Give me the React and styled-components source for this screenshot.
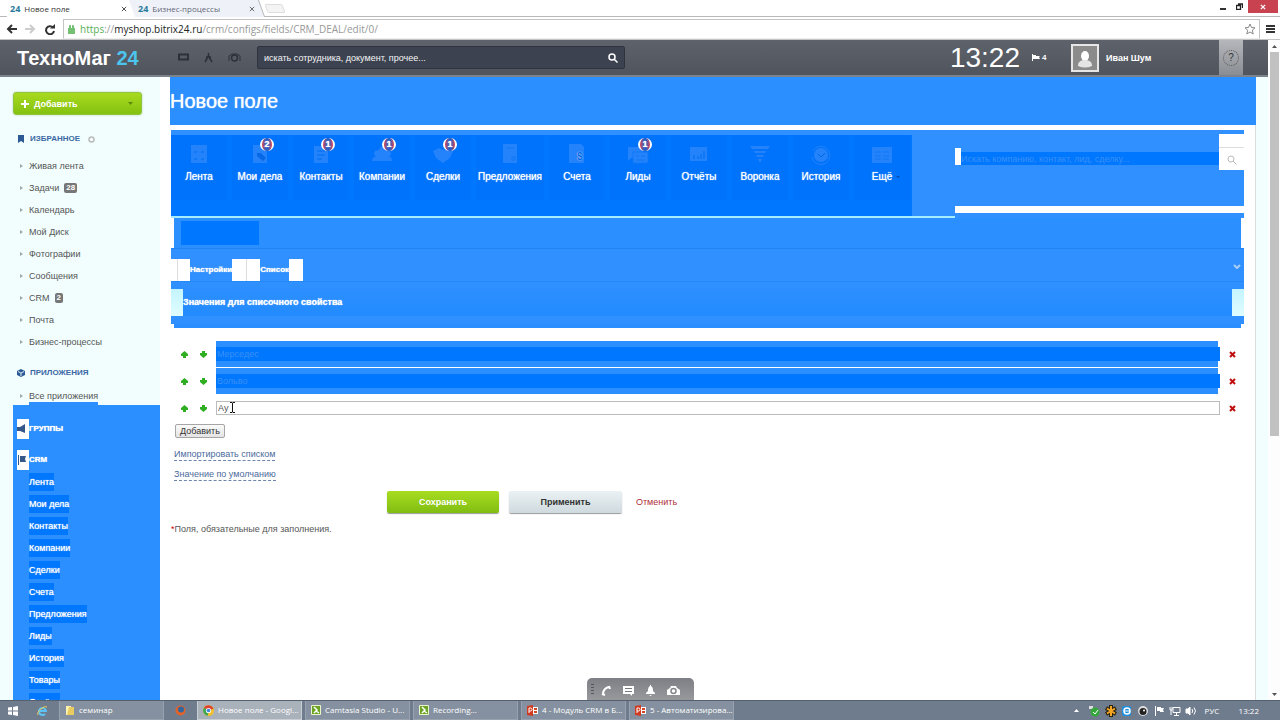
// App.jsx
import React from 'react';
import styled, { createGlobalStyle, css } from 'styled-components';

const SELECT = '#2b8fff';
const SELECT_DARK = '#0077ff';

const GlobalStyle = createGlobalStyle`
  * {
    box-sizing: border-box;
  }
  body {
    margin: 0;
    background: #fff;
    color: #555;
    font-family: "Liberation Sans", Arial, sans-serif;
    font-size: 9px;
    line-height: 12px;
  }
  a {
    color: inherit;
    text-decoration: none;
  }
  ul {
    margin: 0;
    padding: 0;
    list-style: none;
  }
  button,
  input {
    margin: 0;
    padding: 0;
    border: none;
    background: none;
    color: inherit;
    font: inherit;
    outline: none;
  }
  button {
    cursor: pointer;
  }
  svg {
    display: block;
    flex: none;
  }
`;

const Desktop = styled.div`
  display: flex;
  flex-direction: column;
  height: 100vh;
  overflow: hidden;
`;

/* ---------- browser ---------- */

const TabStrip = styled.div`
  display: flex;
  flex: none;
  height: 17px;
  padding-left: 4px;
  border-bottom: 1px solid #b9b9b9;
  font-family: "Open Sans", "Noto Sans", sans-serif;
  font-size: 8px;
  color: #444;
`;

const BrowserTab = styled.div`
  position: relative;
  z-index: 0;
  display: flex;
  align-items: center;
  gap: 4px;
  width: 128px;
  height: 17px;
  padding: 0 5px 0 6px;
  color: ${(p) => (p.$active ? '#333' : '#667')};

  &::before {
    content: '';
    position: absolute;
    z-index: -1;
    inset: 0 -2px 0 0;
    background: ${(p) => (p.$active ? '#fff' : '#eef2f8')};
    border-right: 1px solid #b9b9b9;
    transform: skewX(20deg);
  }

  b {
    color: #2a7a9c;
    font-size: 9px;
  }
  span {
    flex: 1;
  }
`;

const NewTab = styled.button`
  width: 18px;
  height: 9px;
  margin: 4px 0 0 6px;
  border: 1px solid #ddd;
  background: #f4f4f4;
  border-radius: 2px;
  transform: skewX(20deg);
`;

const WindowButtons = styled.div`
  display: flex;
  align-items: flex-start;
  margin-left: auto;
  padding-right: 2px;
`;

const WindowButton = styled.button`
  display: flex;
  align-items: center;
  justify-content: center;
  width: ${(p) => (p.$close ? 30 : 17)}px;
  height: 13px;
  background: ${(p) => (p.$close ? '#c8434f' : 'transparent')};
`;

const Toolbar = styled.div`
  display: flex;
  align-items: center;
  flex: none;
  gap: 6px;
  height: 23px;
  padding: 2px 5px 0 6px;
  border-bottom: 1px solid #c4c4c4;
`;

const Address = styled.div`
  display: flex;
  align-items: center;
  flex: 1;
  gap: 4px;
  height: 20px;
  padding: 0 3px;
  border: 1px solid #c4c4c4;
  border-bottom-color: #eee;
  font-family: "Open Sans", "Noto Sans", sans-serif;
  font-size: 10px;
  color: #999;

  p {
    flex: 1;
    margin: 0;
  }
  i {
    font-style: normal;
    color: #58b158;
  }
  b {
    font-weight: normal;
    color: #222;
  }
`;

const Viewport = styled.div`
  position: relative;
  display: flex;
  flex: 1;
  min-height: 0;
`;

const Page = styled.div`
  display: flex;
  flex-direction: column;
  flex: 1;
  min-width: 0;
  background: #f2fefe;
`;

const Scrollbar = styled.div`
  display: flex;
  flex-direction: column;
  align-items: center;
  width: 12px;
  padding: 5px 0 4px 1px;
  background: #fdfdfd;
`;

const ScrollThumb = styled.div`
  width: 9px;
  height: 59%;
  margin: 4px 0 auto;
  background: #c1c1c1;
`;

/* ---------- portal header ---------- */

const Header = styled.header`
  display: flex;
  align-items: center;
  flex: none;
  height: 37px;
  padding-left: 17px;
  background: linear-gradient(#5e626b, #50545d);
  border-bottom: 2px solid #7d838b;
  color: #fff;
`;

const Logo = styled.a`
  width: 161px;
  font-weight: bold;
  font-size: 20px;
  line-height: 24px;

  span {
    color: #4cc5ec;
  }
`;

const HeaderIcons = styled.div`
  display: flex;
  gap: 14px;
  width: 79px;
  color: #2c3038;
`;

const HeaderSearch = styled.form`
  display: flex;
  align-items: center;
  flex: 0 1 368px;
  height: 23px;
  padding: 0 6px;
  background: #3c424f;
  border: 1px solid #2e333d;
  border-radius: 2px;

  input {
    flex: 1;
    min-width: 0;
  }
  input::placeholder {
    color: #f4f5f7;
    opacity: 1;
  }
`;

const Clock = styled.div`
  margin-left: auto;
  font-size: 28px;
  line-height: 32px;
`;

const Flag = styled.div`
  display: flex;
  align-items: center;
  gap: 2px;
  width: 51px;
  padding-left: 12px;
  font-size: 8px;
  font-weight: bold;
`;

const Avatar = styled.div`
  display: flex;
  align-items: flex-end;
  justify-content: center;
  width: 28px;
  height: 28px;
  background: #8b8b8b;
  border: 2px solid #e6e6e6;
`;

const UserName = styled.a`
  width: 120px;
  padding-left: 7px;
  font-weight: bold;
`;

const HelpButton = styled.button`
  display: flex;
  align-items: center;
  justify-content: center;
  align-self: stretch;
  width: 24px;
  margin-right: 25px;
  background: linear-gradient(#b5b7bb, #8a8d93);
  color: #333;

  span {
    width: 16px;
    height: 16px;
    border: 1px dotted #555;
    border-radius: 50%;
    font-size: 10px;
    line-height: 14px;
  }
`;

/* ---------- sidebar ---------- */

const Body = styled.div`
  display: flex;
  flex: 1;
  min-height: 0;
`;

const Sidebar = styled.nav`
  flex: none;
  width: 160px;
  padding: 15px 0 0 13px;
  overflow: hidden;
`;

const AddButton = styled.button`
  display: flex;
  align-items: center;
  width: 129px;
  height: 23px;
  margin-bottom: 13px;
  padding: 0 8px 0 7px;
  gap: 5px;
  background: linear-gradient(#a8da1f, #84c110);
  border: 1px solid #8fc53a;
  border-radius: 3px;
  box-shadow: 0 0 2px #b0c8a0;
  color: #fff;
  font-weight: bold;

  span {
    flex: 1;
    text-align: left;
  }
`;

const SideHeading = styled.h3`
  display: flex;
  align-items: center;
  gap: 5px;
  height: 22px;
  margin: 0;
  padding-left: 4px;
  font-size: 8px;
  font-weight: bold;
  color: #3a68a4;

  span {
    margin-right: 3px;
  }
`;

const SideList = styled.ul`
  padding: 5px 0 9px;
`;

const SideItem = styled.li`
  display: flex;
  align-items: center;
  gap: 5px;
  height: 22px;

  &::before {
    content: '';
    margin: 0 1px 0 7px;
    border: 2px solid transparent;
    border-left: 3px solid #9aa;
    border-right: none;
  }
`;

const Count = styled.b`
  padding: 0 2px;
  background: #777;
  border-radius: 2px;
  color: #fff;
  font-size: 8px;
  line-height: 10px;
`;

const LastItem = styled(SideItem)`
  height: 21px;
  align-items: flex-end;

  &::before {
    margin-bottom: 7px;
  }
  a {
    border-bottom: 3px solid ${SELECT};
  }
`;

const glow = css`
  color: #fff;
  text-shadow: 0 0 1px #fff;
`;

const SelectedBlock = styled.div`
  padding-top: 14px;
  background: ${SELECT};
`;

const SelectedHeading = styled.h3`
  display: flex;
  align-items: center;
  height: 20px;
  margin: 0 0 11px 4px;
  font-size: 8px;
  font-weight: bold;
  ${glow}

  svg {
    width: 12px;
    height: 20px;
    padding: 4px 2px 4px 0;
    background: #fff;
    color: #35588a;
  }
`;

const SelectedList = styled.ul`
  margin-top: -10px;
`;

const SelectedItem = styled.li`
  height: 22px;
  padding: 2px 0 2px 16px;

  a {
    display: inline-block;
    height: 18px;
    background: ${SELECT_DARK};
    line-height: 18px;
    ${glow}
  }
`;

/* ---------- content ---------- */

const Content = styled.main`
  flex: 1;
  min-width: 0;
  padding-left: 10px;
  background: #fff;
  border-right: 1px solid #d8dcdc;
`;

const Gutter = styled.div`
  flex: none;
  width: 12px;
`;

const Title = styled.h1`
  height: 48px;
  margin: 0 -1px 5px 0;
  background: ${SELECT};
  ${glow}
  font-size: 20px;
  font-weight: normal;
  line-height: 48px;
`;

const Panel = styled.section`
  margin: 0 11px 0 1px;
`;

const CrmBar = styled.div`
  display: flex;
  height: 88px;
  background: #3090ff;
`;

const MenuSide = styled.div`
  flex: none;
  width: 784px;
  padding-top: 5px;
  border-bottom: 2px solid #a6ecff;
`;

const CrmMenu = styled.ul`
  display: flex;
  gap: 5px;
  width: 741px;
  height: 81px;
  background: ${SELECT_DARK};
`;

const MenuItem = styled.li`
  width: ${(p) => (p.$wide ? 68 : 56)}px;

  a {
    position: relative;
    display: flex;
    flex-direction: column;
    align-items: center;
    gap: 6px;
    height: 65px;
    padding-top: 8px;
    background: #0073fc;
    ${glow}
    font-size: 10px;
    white-space: nowrap;
  }
  svg {
    width: 22px;
    height: 22px;
    color: #2482fa;
  }
`;

const Badge = styled.b`
  position: absolute;
  top: 3px;
  left: 50%;
  width: 14px;
  height: 13px;
  border: solid #fff;
  border-width: 0 2px;
  border-radius: 7px;
  background: linear-gradient(90deg, #e0434c, #2760c8 40%, #2760c8 60%, #e0434c);
  font-size: 9px;
  line-height: 13px;
  text-align: center;
`;

const MenuArrow = styled.i`
  display: inline-block;
  margin: 0 -8px 2px 4px;
  border: 2px solid transparent;
  border-top-color: #0a4fa8;
  border-bottom: none;
`;

const SearchSide = styled.div`
  display: flex;
  flex-direction: column;
  flex: 1;
  min-width: 0;
  padding-top: 4px;
`;

const CrmSearch = styled.form`
  display: flex;
  height: 36px;
  margin-bottom: 36px;

  &::before {
    content: '';
    width: 6px;
    height: 17px;
    margin-top: 14px;
    background: #fff;
  }
  input {
    flex: 1;
    min-width: 0;
    height: 13px;
    margin-top: 18px;
    background: ${SELECT_DARK};
  }
  input::placeholder {
    color: #3a90f6;
    opacity: 1;
  }
  button {
    display: flex;
    align-items: flex-end;
    justify-content: center;
    width: 25px;
    padding-bottom: 5px;
    background: linear-gradient(#fff 13px, #ddd 13px, #ddd 14px, #fff 14px);
    color: #bbb;
  }
`;

const WhiteBar = styled.div`
  height: 7px;
  background: #fff;
`;

const Strip = styled.div`
  height: ${(p) => p.$height}px;
  margin: 0 3px;
  padding: ${(p) => (p.$height > 10 ? '3px 7px' : 0)};
  background: ${SELECT};

  &::before {
    content: '';
    display: ${(p) => (p.$height > 10 ? 'block' : 'none')};
    width: 78px;
    height: 24px;
    background: ${SELECT_DARK};
  }
`;

const FormTabs = styled.div`
  display: flex;
  align-items: center;
  height: 34px;
  padding: 9px 0 0;
  background: #3090ff;
  border-top: 1px solid #2084f5;
  border-bottom: 1px solid #2388f8;

  button {
    height: 22px;
    font-size: 8px;
    font-weight: bold;
    ${glow}
  }
  svg {
    margin: 0 3px 6px auto;
    color: #a9cdf5;
  }
`;

const TabEdge = styled.span`
  width: ${(p) => p.$width}px;
  height: 22px;
  background: #fff;

  & + & {
    border-left: 1px solid #ddd;
  }
`;

const SectionHead = styled.div`
  display: flex;
  justify-content: space-between;
  padding: 7px 0 8px;
  background: linear-gradient(#3090ff, #228bff 80%, #3090ff 82%);

  &::before,
  &::after {
    content: '';
    width: 12px;
    height: 27px;
    background: linear-gradient(#c4f4ff, #e0fdff);
  }
  h2 {
    flex: 1;
    margin: 0;
    font-size: 9px;
    line-height: 27px;
    ${glow}
  }
`;

const Values = styled.div`
  display: flex;
  flex-direction: column;
  gap: 1px;
  padding: 13px 0 3px 4px;
`;

const ValueRow = styled.div`
  display: flex;
  align-items: center;
  height: 26px;

  button {
    display: flex;
    justify-content: center;
    width: 19px;
    color: #2fae22;
  }
  button:last-child {
    width: 24px;
    color: #c00d0d;
  }
`;

const ValueField = styled.div`
  display: flex;
  align-items: center;
  flex: 1;
  height: 26px;
  margin: 0 2px 0 3px;
  background: ${(p) => (p.$selected ? SELECT : 'transparent')};

  input {
    flex: 1;
    width: 100%;
    height: 14px;
    margin-right: -2px;
    padding: 0 1px;
    background: ${(p) => (p.$selected ? SELECT_DARK : '#fff')};
    border: ${(p) => (p.$selected ? 'none' : '1px solid #bbb')};
    color: ${(p) => (p.$selected ? '#3a90f6' : '#555')};
  }
`;

const Cursor = styled.svg`
  position: absolute;
  left: 229px;
  top: 362px;
  color: #111;
`;

const PlainButton = styled.button`
  display: block;
  width: 50px;
  height: 14px;
  margin: 0 0 11px 4px;
  background: linear-gradient(#fafafa, #e4e4e4);
  border: 1px solid #a5a5a5;
  border-radius: 2px;
  color: #333;
  line-height: 12px;
`;

const DashedLink = styled.a`
  display: table;
  margin: 0 0 8px 3px;
  border-bottom: 1px dashed #6d85ad;
  color: #4c6a9b;
  line-height: 11px;
`;

const Actions = styled.div`
  display: flex;
  align-items: center;
  gap: 10px;
  padding: 2px 0 10px 216px;

  a {
    margin-left: 4px;
    color: #b03038;
  }
`;

const ActionButton = styled.button`
  width: ${(p) => (p.$primary ? 112 : 113)}px;
  height: 22px;
  border-radius: 2px;
  background: ${(p) =>
    p.$primary ? 'linear-gradient(#a8dc20, #80bd12)' : 'linear-gradient(#eaf1f4, #cfdade)'};
  box-shadow: 0 1px 1px #999;
  color: ${(p) => (p.$primary ? '#fff' : '#333')};
  font-weight: bold;
`;

const Note = styled.p`
  margin: 0;

  span {
    color: #c00;
  }
`;

const Dock = styled.div`
  position: absolute;
  bottom: 0;
  left: 50%;
  display: flex;
  align-items: center;
  justify-content: space-between;
  width: 107px;
  height: 22px;
  margin-left: -53px;
  padding: 2px 14px 0 4px;
  background: linear-gradient(#7d7f84, #97999d);
  border-radius: 5px 5px 0 0;
  color: #fff;

  &::before {
    content: '';
    width: 3px;
    height: 12px;
    margin-right: -4px;
    background: repeating-linear-gradient(#55575c 0 1px, transparent 1px 3px);
  }
`;

/* ---------- taskbar ---------- */

const Taskbar = styled.footer`
  display: flex;
  align-items: center;
  flex: none;
  height: 20px;
  background: #6f7c8e;
  border-top: 1px solid #555f6e;
  color: #fff;
  font-family: "Open Sans", "Noto Sans", sans-serif;
  font-size: 8px;
`;

const QuickLaunch = styled.button`
  display: flex;
  justify-content: center;
  width: ${(p) => p.$width}px;
`;

const Task = styled.button`
  display: flex;
  align-items: center;
  gap: 4px;
  width: 105px;
  height: 19px;
  margin-right: ${(p) => (p.$spaced ? 0 : 3)}px;
  padding: 0 5px;
  background: ${(p) => (p.$active ? '#a9b1bb' : '#8591a0')};
  border: 1px solid ${(p) => (p.$active ? '#c9ced5' : '#98a2af')};
  border-top: none;
  white-space: nowrap;
`;

const Tray = styled.div`
  display: flex;
  align-items: center;
  gap: 4px;
  margin-left: auto;
  padding-right: 21px;

  span {
    width: 34px;
    padding-left: 4px;
  }
`;

/* ---------- drawings ---------- */

const Magnifier = ({ size = 10, width = 2 }) => (
  <svg width={size} height={size} viewBox="0 0 10 10" fill="none" stroke="currentColor" strokeWidth={width}>
    <circle cx="4" cy="4" r="3" />
    <path d="M6 6l3.500 3.500" />
  </svg>
);

const menuIcons = {
  feed: (
    <>
      <path d="M3 2h16v18H3z" />
      <path d="M6 9h3m4 0h3M6 16h3m4 0h3" stroke="#0f78f6" strokeWidth="2" />
    </>
  ),
  tasks: (
    <>
      <path d="M4 2h14v18H4z" />
      <path d="M8 10h4l5 5-3 3-6-5z" fill="#0668e6" />
    </>
  ),
  contacts: (
    <>
      <path d="M4 3h14v17H4z" />
      <path d="M7 8h8M7 12h8M7 16h5" stroke="#0f78f6" strokeWidth="2" />
    </>
  ),
  companies: (
    <path d="M1 18c0-4 3-4 4-5a3 3 0 1 1 4-2 4 4 0 1 1 5 0 3 3 0 1 1 4 2c1 1 3 1 3 5z" />
  ),
  deals: <path d="M1 8l6-3 4 2 4-2 6 3-3 7-7 5-7-5z" />,
  offers: (
    <>
      <path d="M4 1h14v19H4z" />
      <path d="M7 5h8M13 14h3v3h-3z" stroke="#0f78f6" strokeWidth="1" />
    </>
  ),
  bills: (
    <>
      <path d="M3 1h12l3 3v16H3z" />
      <text x="11" y="17" fontSize="10" fontWeight="bold" fill="#0068e8">$</text>
    </>
  ),
  leads: (
    <>
      <path d="M1 4h15v11H4l-3 3z" />
      <path d="M6 9h15v11H6z" stroke="#0f78f6" />
      <path d="M9 13h3m2 0h4m-9 4h9" stroke="#0f78f6" />
    </>
  ),
  reports: (
    <>
      <path d="M2 4h17v14H2z" />
      <path d="M6 16v-4m4 4v-3m3 3v-5m3 5v-8" stroke="#0f78f6" strokeWidth="2" />
    </>
  ),
  funnel: (
    <path d="M1 3h20l-2 3H3zM5 8h12l-1 2H6zM7 12h8l-1 2H8zM9 16h4l-2 4z" />
  ),
  history: (
    <>
      <circle cx="11" cy="12" r="7" />
      <path d="M3 8a9 9 0 1 1-1 6" fill="none" stroke="currentColor" />
      <path d="M8 11l3 3 4-4" fill="none" stroke="#0068e8" strokeWidth="1" />
    </>
  ),
  more: (
    <>
      <path d="M1 4h20v16H1z" />
      <path d="M4 9h6m2 0h6M4 13h6m2 0h6M4 16h6m2 0h6" stroke="#0f78f6" strokeWidth="1" />
    </>
  ),
};

const MenuIcon = ({ name }) => (
  <svg viewBox="0 0 22 22" fill="currentColor">{menuIcons[name]}</svg>
);

const Arrow = ({ down }) => (
  <svg width="9" height="9" viewBox="0 0 9 9" fill="currentColor">
    <path d={down ? 'M3 1h3v2h2v2L4.500 8 1 5V3h2z' : 'M4.500 1L8 4v2H6v2H3V6H1V4z'} />
  </svg>
);

const Cross = ({ size = 7, color = 'currentColor', width = 2 }) => (
  <svg width={size} height={size} viewBox="0 0 7 7" stroke={color} strokeWidth={width}>
    <path d="M1 1l5 5M6 1L1 6" />
  </svg>
);

const Triangle = ({ up }) => (
  <svg width="5" height="3" viewBox="0 0 5 3" fill="currentColor">
    <path d={up ? 'M0 3L2.500 0 5 3z' : 'M0 0h5L2.500 3z'} />
  </svg>
);

const FolderIcon = () => (
  <svg width="10" height="11" viewBox="0 0 10 11">
    <path d="M1 1h5v9H1z" fill="#fff3b0" />
    <path d="M4 2h5v8H2z" fill="#e8cc62" />
  </svg>
);

const ChromeIcon = () => (
  <svg width="11" height="11" viewBox="0 0 12 12">
    <circle cx="6" cy="6" r="6" fill="#f2c12d" />
    <path d="M6 6L1 3a6 6 0 0 1 10.500 1z" fill="#dc4234" />
    <path d="M6 6L1 3a6 6 0 0 0 4 9z" fill="#3fa757" />
    <circle cx="6" cy="6" r="2.800" fill="#fff" />
    <circle cx="6" cy="6" r="2" fill="#4387d6" />
  </svg>
);

const CamtasiaIcon = () => (
  <svg width="10" height="10" viewBox="0 0 10 10">
    <rect width="10" height="10" rx="1" fill="#eaf5c8" />
    <rect x="1" y="1" width="8" height="8" fill="#6da324" />
    <path d="M3 2l3 3-3 3M5 6l3 2" stroke="#fff" fill="none" strokeWidth="1.500" />
  </svg>
);

const PowerPointIcon = () => (
  <svg width="11" height="11" viewBox="0 0 11 11">
    <path d="M5 2h6v7H5z" fill="#fff" />
    <path d="M7 3h3v2H7zM7 6h3v2H7z" fill="#d24726" />
    <path d="M0 1l6-1v11l-6-1z" fill="#d03a20" />
    <path d="M2 8V3h1.500a1.300 1.300 0 0 1 0 3H2" stroke="#fff" fill="none" />
  </svg>
);

/* ---------- data ---------- */

const favourites = [
  { title: 'Живая лента' },
  { title: 'Задачи', count: 28 },
  { title: 'Календарь' },
  { title: 'Мой Диск' },
  { title: 'Фотографии' },
  { title: 'Сообщения' },
  { title: 'CRM', count: 2 },
  { title: 'Почта' },
  { title: 'Бизнес-процессы' },
];

const crmLinks = [
  'Лента', 'Мои дела', 'Контакты', 'Компании', 'Сделки', 'Счета',
  'Предложения', 'Лиды', 'История', 'Товары', 'Отчёты',
];

const crmMenu = [
  { title: 'Лента', icon: 'feed' },
  { title: 'Мои дела', icon: 'tasks', count: 2 },
  { title: 'Контакты', icon: 'contacts', count: 1 },
  { title: 'Компании', icon: 'companies', count: 1 },
  { title: 'Сделки', icon: 'deals', count: 1 },
  { title: 'Предложения', icon: 'offers', wide: true },
  { title: 'Счета', icon: 'bills' },
  { title: 'Лиды', icon: 'leads', count: 1 },
  { title: 'Отчёты', icon: 'reports' },
  { title: 'Воронка', icon: 'funnel' },
  { title: 'История', icon: 'history' },
  { title: 'Ещё', icon: 'more', arrow: true },
];

const values = [
  { text: 'Мерседес', selected: true },
  { text: 'Вольво', selected: true },
  { text: 'Ау' },
];

/* ---------- parts ---------- */

const Browser = () => (
  <>
    <TabStrip>
      <BrowserTab $active>
        <b>24</b>
        <span>Новое поле</span>
        <Cross size={6} color="#333" width={1} />
      </BrowserTab>
      <BrowserTab>
        <b>24</b>
        <span>Бизнес-процессы</span>
        <Cross size={6} color="#555" width={1} />
      </BrowserTab>
      <NewTab aria-label="Новая вкладка" />
      <WindowButtons>
        <WindowButton aria-label="Свернуть">
          <svg width="6" height="6"><path d="M0 4h6v2H0z" fill="#333" /></svg>
        </WindowButton>
        <WindowButton aria-label="Развернуть">
          <svg width="7" height="7" fill="none" stroke="#222">
            <path d="M.5 2.500h4v4h-4zM2 1h4.500v4" strokeWidth="1.300" />
          </svg>
        </WindowButton>
        <WindowButton $close aria-label="Закрыть">
          <Cross size={6} color="#fff" width={1.5} />
        </WindowButton>
      </WindowButtons>
    </TabStrip>
    <Toolbar>
      <svg width="12" height="10" viewBox="0 0 12 10" fill="none" stroke="#333" strokeWidth="2">
        <path d="M11 5H2M6 1L2 5l4 4" />
      </svg>
      <svg width="12" height="10" viewBox="0 0 12 10" fill="none" stroke="#ccc" strokeWidth="2">
        <path d="M1 5h9M6 1l4 4-4 4" />
      </svg>
      <svg width="15" height="11" viewBox="0 0 15 11" fill="none" stroke="#333" strokeWidth="2">
        <path d="M11 3.500A4 4 0 1 0 12 7" />
        <path d="M8 4.500h5V0z" fill="#333" stroke="none" />
      </svg>
      <Address>
        <svg width="9" height="10" viewBox="0 0 9 10" fill="#74c174">
          <path d="M1 4h7v6H1z" />
          <path d="M2.500 4V1.500h1V4M5.500 4V1.500h1V4" stroke="#74c174" />
        </svg>
        <p><i>https</i>://<b>myshop.bitrix24.ru</b>/crm/configs/fields/CRM_DEAL/edit/0/</p>
        <svg width="12" height="12" viewBox="0 0 12 12" fill="none" stroke="#888">
          <path d="M6 1l1.500 3.500 3.500.3-2.700 2.400.9 3.800L6 9l-3.200 2 .9-3.800L1 4.800l3.500-.3z" />
        </svg>
      </Address>
      <svg width="9" height="9" fill="#333"><path d="M0 0h9v2H0zM0 3h9v2H0zM0 6h9v2H0z" /></svg>
    </Toolbar>
  </>
);

const PortalHeader = () => (
  <Header>
    <Logo href="#">ТехноМаг <span>24</span></Logo>
    <HeaderIcons>
      <svg width="11" height="11" viewBox="0 0 11 11" fill="none" stroke="currentColor" strokeWidth="2">
        <path d="M1 2.500h9v5H1z" />
      </svg>
      <svg width="11" height="11" viewBox="0 0 11 11" fill="none" stroke="currentColor" strokeWidth="1.500">
        <path d="M5.500 1v3L2 10M5.500 4L9 10M3 5h5" />
      </svg>
      <svg width="13" height="11" viewBox="0 0 13 11" fill="none" stroke="currentColor" strokeWidth="1.500">
        <path d="M1 9V4l3-2h5l3 2v5" strokeWidth="1" />
        <circle cx="6.500" cy="6" r="3" />
      </svg>
    </HeaderIcons>
    <HeaderSearch>
      <input type="text" aria-label="Поиск" placeholder="искать сотрудника, документ, прочее..." />
      <button type="button" aria-label="Найти"><Magnifier width={1.5} /></button>
    </HeaderSearch>
    <Clock>13:22</Clock>
    <Flag>
      <svg width="8" height="7" fill="#fff"><path d="M0 0h1v7H0zM1 1h3v1h4L7 3l1 2H1z" /></svg>
      4
    </Flag>
    <Avatar>
      <svg width="18" height="22" viewBox="0 0 18 22" fill="#fff">
        <ellipse cx="9" cy="8" rx="4" ry="5" />
        <path d="M2 18c0-4 2-5 5-6h4c3 1 5 2 5 6q-7 3-14 0z" fill="#e4e4e4" />
      </svg>
    </Avatar>
    <UserName href="#">Иван Шум</UserName>
    <HelpButton aria-label="Помощь"><span>?</span></HelpButton>
  </Header>
);

const SideMenu = () => (
  <Sidebar>
    <AddButton>
      <svg width="8" height="8" stroke="#fff" strokeWidth="2"><path d="M4 0v8M0 4h8" /></svg>
      <span>Добавить</span>
      <svg width="5" height="3" fill="#5c8a10"><path d="M0 0h5L2.500 3z" /></svg>
    </AddButton>
    <SideHeading>
      <svg width="8" height="8" fill="#2b5a94"><path d="M1 0h6v8L4 6 1 8z" /></svg>
      <span>ИЗБРАННОЕ</span>
      <svg width="7" height="7" fill="none" stroke="#bbb" strokeWidth="1.500"><circle cx="3.500" cy="3.500" r="2.500" /></svg>
    </SideHeading>
    <SideList>
      {favourites.map((item) => (
        <SideItem key={item.title}>
          <a href="#">{item.title}</a>
          {item.count && <Count>{item.count}</Count>}
        </SideItem>
      ))}
    </SideList>
    <SideHeading>
      <svg width="8" height="8" viewBox="0 0 8 8">
        <path d="M4 0l4 2v4L4 8 0 6V2z" fill="#2b5a94" />
        <path d="M1 2.500l3 1.500 3-1.500M4 4v3" stroke="#dcebf8" fill="none" />
      </svg>
      <span>ПРИЛОЖЕНИЯ</span>
    </SideHeading>
    <ul>
      <LastItem><a href="#">Все приложения</a></LastItem>
    </ul>
    <SelectedBlock>
      <SelectedHeading>
        <svg viewBox="0 0 10 12" fill="currentColor"><path d="M0 4h3l5-3v9L3 8H0z" /></svg>
        ГРУППЫ
      </SelectedHeading>
      <SelectedHeading>
        <svg viewBox="0 0 10 12" fill="currentColor"><path d="M1 1h1v10H1zM3 2h6L8 5l1 3H3z" /></svg>
        CRM
      </SelectedHeading>
      <SelectedList>
        {crmLinks.map((title) => (
          <SelectedItem key={title}><a href="#">{title}</a></SelectedItem>
        ))}
      </SelectedList>
    </SelectedBlock>
  </Sidebar>
);

const CrmPanel = () => (
  <CrmBar>
    <MenuSide>
      <CrmMenu>
        {crmMenu.map((item) => (
          <MenuItem key={item.title} $wide={item.wide}>
            <a href="#">
              <MenuIcon name={item.icon} />
              {item.count && <Badge>{item.count}</Badge>}
              <span>{item.title}{item.arrow && <MenuArrow />}</span>
            </a>
          </MenuItem>
        ))}
      </CrmMenu>
    </MenuSide>
    <SearchSide>
      <CrmSearch>
        <input type="text" aria-label="Поиск в CRM" placeholder="Искать компанию, контакт, лид, сделку..." />
        <button type="button" aria-label="Найти"><Magnifier width={1} /></button>
      </CrmSearch>
      <WhiteBar />
    </SearchSide>
  </CrmBar>
);

const ValueList = () => (
  <Values>
    {values.map((value) => (
      <ValueRow key={value.text}>
        <button aria-label="Выше"><Arrow /></button>
        <button aria-label="Ниже"><Arrow down /></button>
        <ValueField $selected={value.selected}>
          <input type="text" aria-label="Значение" defaultValue={value.text} />
        </ValueField>
        <button aria-label="Удалить"><Cross /></button>
      </ValueRow>
    ))}
  </Values>
);

const SystemTaskbar = () => (
  <Taskbar>
    <QuickLaunch $width={26} aria-label="Пуск">
      <svg width="10" height="10" fill="#fff"><path d="M0 1.500L4 1v3.500H0zM5 .9L10 0v4.500H5zM0 5.500h4V9l-4-.5zM5 5.500h5V10l-5-.9z" /></svg>
    </QuickLaunch>
    <QuickLaunch $width={33} aria-label="Internet Explorer">
      <svg width="11" height="11" viewBox="0 0 11 11" fill="none">
        <path d="M2 6h7a3.500 3.500 0 1 0-1 3" stroke="#5ec3f2" strokeWidth="2" />
        <path d="M1 10C-1 7 7 0 10 2" stroke="#f2cf4a" />
      </svg>
    </QuickLaunch>
    <Task $spaced><FolderIcon />семинар</Task>
    <QuickLaunch $width={33} aria-label="Firefox">
      <svg width="11" height="11" viewBox="0 0 11 11">
        <circle cx="5.500" cy="5.500" r="5" fill="#e2622a" />
        <circle cx="6" cy="4.500" r="3" fill="#31679f" />
      </svg>
    </QuickLaunch>
    <Task $active><ChromeIcon />Новое поле - Googl...</Task>
    <Task><CamtasiaIcon />Camtasia Studio - U...</Task>
    <Task><CamtasiaIcon />Recording...</Task>
    <Task><PowerPointIcon />4 - Модуль CRM в Б...</Task>
    <Task><PowerPointIcon />5 - Автоматизирова...</Task>
    <Tray>
      <Triangle up />
      <svg width="18" height="12" viewBox="0 0 18 12">
        <path d="M6 1h4v3H6z" fill="#ddd" />
        <circle cx="12" cy="7" r="4.500" fill="#35a83c" />
        <path d="M10 7l2 2 3-4" stroke="#fff" fill="none" />
      </svg>
      <svg width="12" height="12" viewBox="0 0 12 12">
        <path d="M6 0v12M1 3l10 6M11 3L1 9" stroke="#2b2410" strokeWidth="4" />
        <path d="M6 1v10M2 3.500l8 5M10 3.500l-8 5" stroke="#f5a623" strokeWidth="2" />
      </svg>
      <svg width="12" height="12" viewBox="0 0 12 12">
        <rect x="1" y="1" width="9" height="10" rx="2" fill="#1f8fe0" />
        <circle cx="6" cy="6" r="3" fill="none" stroke="#fff" strokeWidth="1.500" />
        <path d="M3 6h6" stroke="#fff" />
      </svg>
      <svg width="12" height="12" viewBox="0 0 12 12">
        <circle cx="6" cy="6" r="5" fill="#ddd" />
        <circle cx="6" cy="6.500" r="3.500" fill="#222" />
        <circle cx="7" cy="5.500" r="1" fill="#fff" />
      </svg>
      <svg width="12" height="12" viewBox="0 0 12 12" fill="#fff">
        <path d="M2 1h1v10H2zM4 2h4v1h3L10 5l1 2H7V6H4z" />
      </svg>
      <svg width="12" height="12" viewBox="0 0 12 12" fill="none" stroke="#fff">
        <path d="M4 2.500h7v5H4zM5 10.500h5M7.500 8v2M1 2v3h2V2M2 5v5" />
      </svg>
      <svg width="12" height="12" viewBox="0 0 12 12" fill="none" stroke="#fff">
        <path d="M1 4h2l2-2v8L3 8H1z" fill="#fff" />
        <path d="M7 4q1.500 2 0 4M9 2.500q3 3.500 0 7" />
      </svg>
      <span>РУС</span>
      13:22
    </Tray>
  </Taskbar>
);

const App = () => {
  return (
    <Desktop>
      <GlobalStyle />
      <Browser />
      <Viewport>
        <Page>
          <PortalHeader />
          <Body>
            <SideMenu />
            <Content>
              <Title>Новое поле</Title>
              <Panel>
                <CrmPanel />
                <Strip $height={30} />
                <FormTabs>
                  <TabEdge $width={6} />
                  <TabEdge $width={13} />
                  <button>Настройки</button>
                  <TabEdge $width={14} />
                  <TabEdge $width={14} />
                  <button>Список</button>
                  <TabEdge $width={14} />
                  <svg width="8" height="5" viewBox="0 0 8 5" fill="none" stroke="currentColor" strokeWidth="2">
                    <path d="M1 1l3 3 3-3" />
                  </svg>
                </FormTabs>
                <SectionHead>
                  <h2>Значения для списочного свойства</h2>
                </SectionHead>
                <Strip $height={4} />
                <ValueList />
                <PlainButton>Добавить</PlainButton>
                <DashedLink href="#">Импортировать списком</DashedLink>
                <DashedLink href="#">Значение по умолчанию</DashedLink>
                <Actions>
                  <ActionButton $primary>Сохранить</ActionButton>
                  <ActionButton>Применить</ActionButton>
                  <a href="#">Отменить</a>
                </Actions>
                <Note><span>*</span>Поля, обязательные для заполнения.</Note>
              </Panel>
            </Content>
            <Gutter />
          </Body>
        </Page>
        <Scrollbar>
          <Triangle up />
          <ScrollThumb />
          <Triangle />
        </Scrollbar>
        <Cursor width="7" height="11" viewBox="0 0 7 11" fill="none" stroke="currentColor">
          <path d="M1 .5h2l.5.5.5-.5h2M3.500 1v9M1 10.500h2l.5-.5.5.5h2" />
        </Cursor>
        <Dock>
          <svg width="11" height="11" viewBox="0 0 11 11" fill="none" stroke="#fff">
            <path d="M2 9C2 5 5 2 9 2" strokeWidth="2" />
            <path d="M1 9l3 1M8 1l1 3" strokeWidth="2" />
          </svg>
          <svg width="11" height="11" viewBox="0 0 11 11">
            <path d="M0 1h11v8H9v2L7 9H0z" fill="#fff" />
            <path d="M2 3.500h7M2 6.500h7" stroke="#77797e" />
          </svg>
          <svg width="11" height="11" viewBox="0 0 11 11" fill="#fff">
            <path d="M5 0h1v1c2 1 2 3 2 5l2 2v1H1V8l2-2c0-2 0-4 2-5zM4 10h3l-1.500 1z" />
          </svg>
          <svg width="13" height="11" viewBox="0 0 13 11">
            <path d="M0 10V5l3-2 1-2h5l1 2 3 2v5z" fill="#fff" />
            <circle cx="6.500" cy="6" r="2.500" fill="none" stroke="#85878b" strokeWidth="1.500" />
          </svg>
        </Dock>
      </Viewport>
      <SystemTaskbar />
    </Desktop>
  );
};

export default App;
